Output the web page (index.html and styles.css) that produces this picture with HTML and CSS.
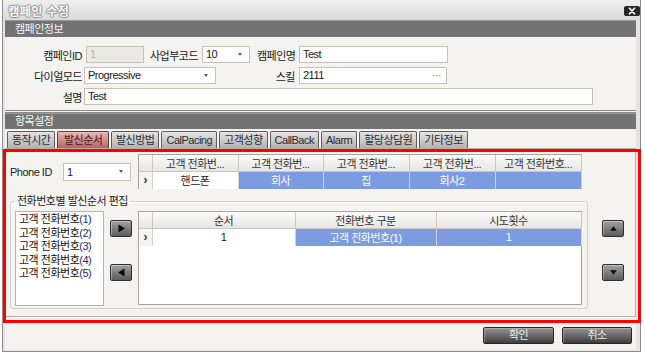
FILE: index.html
```html
<!DOCTYPE html>
<html lang="ko">
<head>
<meta charset="utf-8">
<title>캠페인 수정</title>
<link rel="stylesheet" href="styles.css">
</head>
<body>
<div class="window">
  <div class="titlebar">
    <span class="title">캠페인 수정</span>
    <svg class="close" width="16" height="10" viewBox="0 0 16 10"><rect x="0" y="0" width="16" height="10" rx="2" fill="#262626"/><path d="M5.5 2.2 L10.5 7.8 M10.5 2.2 L5.5 7.8" stroke="#fff" stroke-width="1.7" stroke-linecap="round"/></svg>
  </div>
  <div class="sechead">캠페인정보</div>
  <div class="form">
    <div class="row">
      <span class="lbl l-id">캠페인ID</span>
      <div class="fld dis f-id">1</div>
      <span class="lbl l-biz">사업부코드</span>
      <div class="fld combo f-biz"><span>10</span><i class="arr"></i></div>
      <span class="lbl l-name">캠페인명</span>
      <div class="fld f-name">Test</div>
    </div>
    <div class="row">
      <span class="lbl l-id">다이얼모드</span>
      <div class="fld combo f-dial"><span>Progressive</span><i class="arr"></i></div>
      <span class="lbl l-skill">스킬</span>
      <div class="fld combo f-skill"><span>2111</span><span class="dots">···</span></div>
    </div>
    <div class="row">
      <span class="lbl l-id">설명</span>
      <div class="fld f-desc">Test</div>
    </div>
  </div>
  <div class="sechead sec2">항목설정</div>
  <div class="tabs">
    <span class="tab">동작시간</span>
    <span class="tab active">발신순서</span>
    <span class="tab">발신방법</span>
    <span class="tab">CalPacing</span>
    <span class="tab">고객성향</span>
    <span class="tab">CallBack</span>
    <span class="tab">Alarm</span>
    <span class="tab">할당상담원</span>
    <span class="tab">기타정보</span>
  </div>
  <div class="panel">
    <div class="toprow">
      <span class="plbl">Phone ID</span>
      <div class="fld combo f-phone"><span>1</span><i class="arr"></i></div>
      <div class="gridbox g1">
        <table class="grid">
          <colgroup><col class="c-rh"><col class="c86"><col class="c85"><col class="c86"><col class="c86"><col class="c86"></colgroup>
          <thead><tr><th></th><th>고객 전화번...</th><th>고객 전화번...</th><th>고객 전화번...</th><th>고객 전화번...</th><th>고객 전화번호...</th></tr></thead>
          <tbody><tr><td class="rh">›</td><td>핸드폰</td><td class="sel">회사</td><td class="sel">집</td><td class="sel">회사2</td><td class="sel"></td></tr></tbody>
        </table>
      </div>
    </div>
    <div class="midrow">
      <fieldset class="group">
        <legend>전화번호별 발신순서 편집</legend>
        <div class="groupin">
          <ul class="list">
            <li>고객 전화번호<span class="num">(1)</span></li>
            <li>고객 전화번호<span class="num">(2)</span></li>
            <li>고객 전화번호<span class="num">(3)</span></li>
            <li>고객 전화번호<span class="num">(4)</span></li>
            <li>고객 전화번호<span class="num">(5)</span></li>
          </ul>
          <div class="arrows">
            <span class="abtn"><svg width="9" height="9" viewBox="0 0 9 9"><path d="M1.5 0.5 L8 4.5 L1.5 8.5 Z" fill="#0a0a0a"/></svg></span>
            <span class="abtn"><svg width="9" height="9" viewBox="0 0 9 9"><path d="M7.5 0.5 L1 4.5 L7.5 8.5 Z" fill="#0a0a0a"/></svg></span>
          </div>
          <div class="gridbox g2">
            <table class="grid">
              <colgroup><col class="c-rh"><col class="c143"><col class="c141"><col class="c145"></colgroup>
              <thead><tr><th></th><th>순서</th><th>전화번호 구분</th><th>시도횟수</th></tr></thead>
              <tbody><tr><td class="rh">›</td><td>1</td><td class="sel">고객 전화번호(1)</td><td class="sel">1</td></tr></tbody>
            </table>
          </div>
        </div>
      </fieldset>
      <div class="updown">
        <span class="ubtn"><svg width="7" height="5" viewBox="0 0 7 5"><path d="M3.5 0.3 L6.8 4.7 L0.2 4.7 Z" fill="#0a0a0a"/></svg></span>
        <span class="ubtn"><svg width="7" height="5" viewBox="0 0 7 5"><path d="M0.2 0.3 L6.8 0.3 L3.5 4.7 Z" fill="#0a0a0a"/></svg></span>
      </div>
    </div>
  </div>
  <div class="footer">
    <span class="btn b-ok">확인</span>
    <span class="btn b-cancel">취소</span>
  </div>
  <div class="redbox"></div>
</div>
</body>
</html>
```

FILE: styles.css
```css
* { box-sizing: border-box; }
html, body { margin: 0; padding: 0; background: #ffffff; }
body {
  font-family: "Liberation Sans", "Noto Sans CJK KR", sans-serif;
  font-size: 11px;
  letter-spacing: -0.5px;
  color: #1a1a1a;
}

.window {
  position: relative;
  margin-left: 2px;
  width: 639px;
  border: 1px solid #8e8e8e;
  border-top: none;
  background: #e4e4e4;
  padding: 0 4px 1px 2px;
  display: flex;
  flex-direction: column;
}

.titlebar {
  height: 20px;
  margin: 0 -4px 0 -2px;
  padding: 0 0 0 5px;
  background: linear-gradient(#efefef, #dadada);
  display: flex;
  align-items: center;
  justify-content: space-between;
}
.title {
  font-size: 12.5px;
  letter-spacing: 0;
  font-weight: bold;
  color: #f6f6f6;
  text-shadow: -1px 0 #959595, 1px 0 #959595, 0 -1px #959595, 0 1px #959595;
}
.close { display: block; margin-top: 2px; }

.sechead {
  height: 17px;
  line-height: 17px;
  padding-left: 10px;
  background: #737373;
  color: #f6f6f6;
  border-top: 1px solid #9a9a9a;
}
.sec2 { height: 16px; line-height: 15px; }

.form {
  height: 76px;
  background: #f4f3ef;
  padding-top: 9px;
  border-bottom: 3px double #8a8a8a;
  display: flex;
  flex-direction: column;
  gap: 4px;
}
.row {
  height: 17px;
  display: flex;
  align-items: center;
}
.lbl {
  flex: none;
  text-align: right;
  white-space: nowrap;
  color: #1a1a1a;
}
.l-id { width: 77px; }
.l-biz { width: 48px; margin-left: 6px; }
.l-name { width: 37px; margin-left: 7px; }
.l-skill { width: 79px; }

.fld {
  flex: none;
  height: 17px;
  line-height: 15px;
  border: 1px solid #c7c0b6;
  background: #ffffff;
  padding: 0 3px;
  white-space: nowrap;
}
.dis { background: #ebe9e3; color: #b3aea6; }
.combo {
  display: flex;
  align-items: center;
  justify-content: space-between;
  padding-right: 7px;
}
.arr {
  display: block;
  width: 0;
  height: 0;
  border-left: 2.5px solid transparent;
  border-right: 2.5px solid transparent;
  border-top: 3px solid #5a5a5a;
}
.dots { color: #777; letter-spacing: -0.5px; }
.f-id { width: 58px; margin-left: 4px; }
.f-biz { width: 48px; margin-left: 4px; }
.f-name { width: 149px; margin-left: 5px; }
.f-dial { width: 132px; margin-left: 2px; }
.f-skill { width: 148px; margin-left: 4px; padding-right: 5px; }
.f-desc { width: 509px; margin-left: 2px; }

.tabs {
  height: 19px;
  background: #f4f3ef;
  padding-left: 2px;
  display: flex;
  align-items: flex-end;
  gap: 2px;
}
.tab {
  height: 17px;
  line-height: 16px;
  padding: 0 4px;
  border: 1px solid #5e5e5e;
  border-bottom: none;
  border-radius: 2px 2px 0 0;
  background: linear-gradient(#e4e4e4, #b2b2b2);
  color: #2c2c2c;
  white-space: nowrap;
}
.tab.active {
  padding: 0 5.5px;
  background: linear-gradient(#eab8b8, #b46464);
  color: #4e1414;
  border-color: #6a3a3a;
}

.panel {
  height: 169px;
  background: #f4f3ef;
  border: 1px solid #b4b0a8;
  padding: 5px 0 0 4px;
}
.toprow {
  height: 35px;
  display: flex;
  align-items: center;
}
.plbl { width: 53px; flex: none; color: #1a1a1a; }
.f-phone { width: 68px; height: 18px; line-height: 16px; }

.gridbox {
  flex: none;
  width: 444px;
  border: 1px solid #aaa59c;
  background: #ffffff;
}
.g1 { margin-left: 7px; height: 35px; background: #f4f3ef; }
.g2 { margin-left: 6px; height: 94px; }
.grid {
  width: 100%;
  table-layout: fixed;
  border-collapse: collapse;
}
.c-rh { width: 13px; }
.c86 { width: 86px; }
.c85 { width: 85px; }
.c143 { width: 143px; }
.c141 { width: 141px; }
.c145 { width: 145px; }
.grid th {
  height: 16px;
  padding: 0;
  font-weight: normal;
  color: #333;
  background: linear-gradient(#fafafa, #e6e6e4);
  border: 1px solid #cbc7bf;
  border-top: none;
  white-space: nowrap;
  overflow: hidden;
}
.grid th:first-child { border-left: none; }
.grid td {
  height: 17px;
  padding: 0;
  text-align: center;
  background: #ffffff;
  border: 1px solid #d4d0c8;
  border-bottom: none;
  white-space: nowrap;
  overflow: hidden;
}
.grid td.rh {
  border-left: none;
  background: #f4f4f2;
  font-size: 12px;
  font-weight: bold;
  line-height: 14px;
  color: #333;
}
.grid td.sel { background: #7d9be0; color: #ffffff; }

.midrow {
  margin-top: 6px;
  display: flex;
}
.group {
  flex: none;
  width: 578px;
  margin: 0;
  padding: 4px 4px 2px 4px;
  border: 1px solid #d3cfc7;
  border-radius: 3px;
  box-shadow: inset 1px 1px #ffffff;
}
.group legend {
  padding: 0 2px;
  line-height: 12px;
  color: #1a1a1a;
}
.groupin { display: flex; }
.list {
  flex: none;
  width: 89px;
  height: 95px;
  margin: 0;
  padding: 1px 0 0 3px;
  list-style: none;
  background: #ffffff;
  border: 1px solid #b9b4aa;
}
.list li { line-height: 13.5px; white-space: nowrap; color: #111; }
.num { color: #1f2d66; }

.arrows {
  flex: none;
  width: 22px;
  margin-left: 6px;
  padding-top: 9px;
  display: flex;
  flex-direction: column;
  gap: 27px;
}
.abtn, .ubtn {
  width: 22px;
  height: 17px;
  border: 1px solid #2e2e2e;
  border-radius: 2px;
  background: linear-gradient(#a2a2a2, #5c5c5c);
  box-shadow: inset 1px 1px rgba(255,255,255,0.35);
  display: flex;
  align-items: center;
  justify-content: center;
}
.updown {
  flex: none;
  width: 22px;
  margin-left: 14px;
  padding-top: 25px;
  display: flex;
  flex-direction: column;
  gap: 27px;
}

.footer {
  height: 33px;
  background: #f4f3ef;
  display: flex;
  justify-content: flex-end;
  align-items: flex-start;
  padding: 10px 4px 0 0;
  gap: 8px;
}
.btn {
  height: 17px;
  line-height: 15px;
  text-align: center;
  border: 1px solid #262626;
  border-radius: 2px;
  background: linear-gradient(#949494, #3e3e3e);
  color: #ececec;
  box-shadow: inset 1px 1px rgba(255,255,255,0.25);
}
.b-ok { width: 71px; }
.b-cancel { width: 70px; }

.redbox {
  position: absolute;
  left: 0;
  top: 149px;
  width: 638px;
  height: 174px;
  border: 3px solid #ff0000;
  pointer-events: none;
}
```
